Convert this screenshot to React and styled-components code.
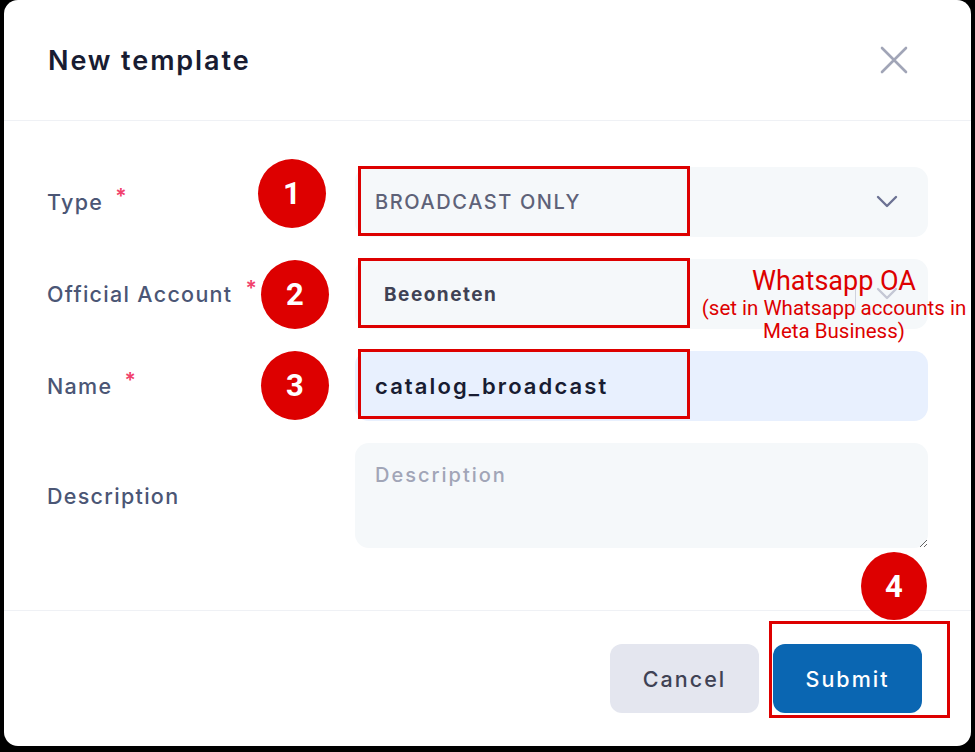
import styled, { createGlobalStyle } from "styled-components";

const GlobalStyle = createGlobalStyle`
  html, body {
    margin: 0;
    padding: 0;
    background: #000;
  }
  body {
    font-family: "Inter", "Open Sans", sans-serif;
  }
`;

const Modal = styled.div`
  position: relative;
  width: 967px;
  height: 746px;
  margin: 0 4px;
  background: #fff;
  border-radius: 14px;
  display: flex;
  flex-direction: column;
  overflow: hidden;
`;

const Header = styled.div`
  height: 121px;
  border-bottom: 1px solid #eff1f5;
  display: flex;
  align-items: center;
  justify-content: space-between;
  padding: 0 62px 0 44px;
  box-sizing: border-box;
`;

const Title = styled.h2`
  margin: 0;
  font-size: 27px;
  font-weight: 600;
  color: #181c32;
  letter-spacing: 1.9px;
`;

const CloseBtn = styled.button`
  border: 0;
  background: none;
  padding: 0;
  width: 30px;
  height: 30px;
  display: flex;
  align-items: center;
  justify-content: center;
  cursor: pointer;
`;

const Body = styled.div`
  flex: 1;
  padding: 46px 43px 0 40px;
  display: flex;
  flex-direction: column;
  gap: 22px;
  border-bottom: 1px solid #eff1f5;
`;

const Row = styled.div`
  display: grid;
  grid-template-columns: 311px 573px;
  align-items: center;
`;

const Label = styled.label`
  font-size: 21.5px;
  font-weight: 500;
  color: #4b5675;
  letter-spacing: 1.3px;
  display: flex;
  align-items: flex-start;
  padding-left: 3px;
`;

const Req = styled.span`
  color: #f1416c;
  font-size: 21px;
  font-weight: 600;
  margin-left: ${(p) => p.$gap || 12}px;
  line-height: 1;
  margin-top: -3px;
`;

const FieldWrap = styled.div`
  position: relative;
`;

const Field = styled.div`
  height: 70px;
  border-radius: 14px;
  background: ${(p) => (p.$filled ? "#e8f0fe" : "#f5f8fa")};
  display: flex;
  align-items: center;
  justify-content: space-between;
  padding: 0 30px 0 ${(p) => p.$pad || 20}px;
  box-sizing: border-box;
  font-size: ${(p) => p.$size || 20}px;
  font-weight: ${(p) => p.$weight || 500};
  letter-spacing: ${(p) => p.$ls || 1.6}px;
  color: ${(p) => p.$color || "#5e6278"};
`;

const TextArea = styled.textarea`
  display: block;
  width: 100%;
  height: 105px;
  box-sizing: border-box;
  border: 0;
  border-radius: 14px;
  background: #f5f8fa;
  padding: 20px 20px;
  font-family: "Inter", sans-serif;
  font-size: 20px;
  font-weight: 500;
  letter-spacing: 2px;
  color: #181c32;
  outline: none;
  &::placeholder {
    color: #a1a5b7;
  }
`;

const RedBox = styled.div`
  position: absolute;
  left: 3px;
  top: ${(p) => p.$top ?? -1}px;
  width: 332px;
  height: 70px;
  border: 3px solid #dd0000;
  box-sizing: border-box;
  pointer-events: none;
`;

const Badge = styled.div`
  position: absolute;
  left: ${(p) => p.$left}px;
  top: ${(p) => p.$top}px;
  width: ${(p) => p.$w || 68}px;
  height: ${(p) => p.$h || 69}px;
  border-radius: 50%;
  background: #dd0000;
  color: #fff;
  font-family: "Roboto", sans-serif;
  font-weight: 700;
  font-size: 31px;
  display: flex;
  align-items: center;
  justify-content: center;
  box-shadow: 0 0 0 1px rgba(255, 255, 255, 0.6);
`;

const Note = styled.div`
  position: absolute;
  left: 334px;
  top: 7px;
  width: 290px;
  text-align: center;
  color: #dd0000;
  font-family: "Roboto", sans-serif;
  line-height: 1.2;
`;

const NoteTitle = styled.div`
  font-size: 27px;
  line-height: 30px;
  margin-bottom: 1px;
`;

const NoteSub = styled.div`
  font-size: 20.5px;
  line-height: 23px;
`;

const Separator = styled.span`
  position: absolute;
  left: 500px;
  top: 21px;
  width: 1px;
  height: 30px;
  background: #cfd2dc;
`;

const Footer = styled.div`
  height: 135px;
  display: flex;
  justify-content: flex-end;
  align-items: flex-start;
  gap: 14px;
  padding: 33px 49px 0 0;
  box-sizing: border-box;
  position: relative;
`;

const Button = styled.button`
  width: 149px;
  height: 69px;
  border: 0;
  border-radius: 12px;
  font-family: "Inter", sans-serif;
  font-size: 21.5px;
  font-weight: 500;
  letter-spacing: 2px;
  background: ${(p) => (p.$primary ? "#0a66b2" : "#e4e6ef")};
  color: ${(p) => (p.$primary ? "#fff" : "#3f4254")};
  cursor: pointer;
`;

const SubmitWrap = styled.div`
  position: relative;
`;

const SubmitBox = styled.div`
  position: absolute;
  left: -4px;
  top: -23px;
  width: 181px;
  height: 97px;
  border: 3px solid #dd0000;
  box-sizing: border-box;
  pointer-events: none;
`;

const Chevron = ({ color = "#6c7293" }) => (
  <svg width="22" height="14" viewBox="0 0 22 14">
    <path d="M2 2 L11 11 L20 2" fill="none" stroke={color} strokeWidth="2.4" strokeLinecap="round" strokeLinejoin="round" />
  </svg>
);

export default function App() {
  return (
    <>
      <GlobalStyle />
      <Modal>
        <Header>
          <Title>New template</Title>
          <CloseBtn aria-label="close">
            <svg width="28" height="28" viewBox="0 0 28 28">
              <path d="M2 2 L26 26 M26 2 L2 26" stroke="#a1a5b7" strokeWidth="2.6" strokeLinecap="round" />
            </svg>
          </CloseBtn>
        </Header>

        <Body>
          <Row>
            <Label>
              Type<Req>*</Req>
            </Label>
            <FieldWrap>
              <Field $color="#5e6278">
                <span>BROADCAST ONLY</span>
                <Chevron />
              </Field>
              <RedBox />
              <Badge $left={-97} $top={-8}>1</Badge>
            </FieldWrap>
          </Row>

          <Row>
            <Label>
              Official Account<Req $gap={13}>*</Req>
            </Label>
            <FieldWrap>
              <Field $pad={29} $weight={700} $size={19} $ls={1.5} $color="#3f4254">
                <span>Beeoneten</span>
                <Chevron color="#c4c7d4" />
              </Field>
              <Separator />
              <RedBox />
              <Badge $left={-94} $top={1}>2</Badge>
              <Note>
                <NoteTitle>Whatsapp OA</NoteTitle>
                <NoteSub>(set in Whatsapp accounts in</NoteSub>
                <NoteSub>Meta Business)</NoteSub>
              </Note>
            </FieldWrap>
          </Row>

          <Row>
            <Label>
              Name<Req>*</Req>
            </Label>
            <FieldWrap>
              <Field $filled $weight={600} $size={22} $ls={2.1} $color="#181c32">
                <span>catalog_broadcast</span>
              </Field>
              <RedBox $top={-2} />
              <Badge $left={-94} $top={0}>3</Badge>
            </FieldWrap>
          </Row>

          <Row>
            <Label>Description</Label>
            <FieldWrap>
              <TextArea placeholder="Description" />
            </FieldWrap>
          </Row>
        </Body>

        <Footer>
          <Button>Cancel</Button>
          <SubmitWrap>
            <Button $primary>Submit</Button>
            <SubmitBox />
            <Badge $left={88} $top={-92} $w={66} $h={68}>4</Badge>
          </SubmitWrap>
        </Footer>
      </Modal>
    </>
  );
}
